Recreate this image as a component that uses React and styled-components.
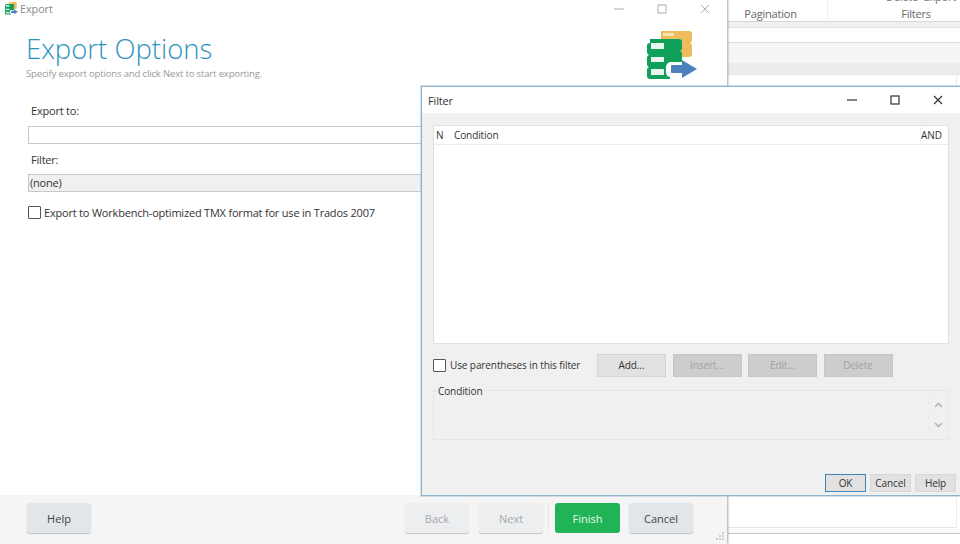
import styled, { createGlobalStyle } from 'styled-components';

const GlobalStyle = createGlobalStyle`
  html, body { margin: 0; padding: 0; background: #fff; }
  body { font-family: "Open Sans", "Noto Sans", sans-serif; overflow: hidden; }
`;

const Desktop = styled.div`
  position: relative;
  width: 960px;
  height: 544px;
  overflow: hidden;
  background: #fff;
  color: #333;
`;

/* main window behind everything, on the right side */
const BackWindow = styled.div`
  position: absolute;
  left: 728px;
  top: 0;
  width: 232px;
  height: 544px;
  display: flex;
  flex-direction: column;
  background: #fff;
`;

const Ribbon = styled.div`
  height: 22px;
  box-sizing: border-box;
  position: relative;
  display: grid;
  grid-template-columns: 100px 1fr;
  border-bottom: 1px solid #d8d8d8;
  font-size: 11px;
  letter-spacing: -0.2px;
  color: #666;
`;

const RibbonGroup = styled.div`
  text-align: center;
  line-height: 27px;
  padding-left: ${p => p.$pad || 0}px;
  padding-right: ${p => p.$padRight || 0}px;
  border-right: ${p => (p.$line ? '1px solid #f0f0f0' : 'none')};
`;

const RibbonClipped = styled.div`
  position: absolute;
  right: 4px;
  top: -9px;
  font-size: 11px;
  line-height: 12px;
  color: #777;
  word-spacing: 3px;
`;

const Band = styled.div`
  height: ${p => p.$h}px;
  background: ${p => p.$bg};
  border-bottom: ${p => (p.$line ? `1px solid ${p.$line}` : 'none')};
  flex-shrink: 0;
`;

const ResultsArea = styled.div`
  flex: 1;
  margin-right: 3px;
  border-right: 1px solid #ececec;
  border-bottom: 1px solid #e4e4e4;
`;

const ExportWindow = styled.div`
  position: absolute;
  left: 0;
  top: 0;
  width: 727px;
  height: 544px;
  display: flex;
  flex-direction: column;
  background: #fff;
  box-shadow: 1px 0 2px rgba(0, 0, 0, 0.35);
`;

const TitleBar = styled.div`
  display: flex;
  align-items: center;
  height: ${p => p.$h}px;
  flex-shrink: 0;
  background: #fff;
  padding-left: ${p => p.$left}px;
  font-size: 11px;
  letter-spacing: -0.15px;
  color: ${p => p.$color};
`;

const TitleText = styled.span`
  flex: 1;
  margin-left: ${p => p.$gap || 0}px;
`;

const WinButtons = styled.div`
  display: flex;
  align-items: center;
  margin-right: ${p => p.$right}px;
  gap: ${p => p.$gap}px;
  color: ${p => p.$color};
`;

const Header = styled.div`
  position: relative;
  height: 75px;
  flex-shrink: 0;
  padding: 14px 0 0 26px;
  box-sizing: border-box;
`;

const Heading = styled.h1`
  margin: 0;
  font-size: 27.5px;
  line-height: 36px;
  font-weight: 300;
  color: #2b93bf;
`;

const SubHeading = styled.p`
  margin: 0;
  font-size: 9.5px;
  letter-spacing: -0.15px;
  line-height: 13px;
  color: #999;
`;

const LargeLogo = styled.div`
  position: absolute;
  right: 30px;
  top: 14px;
`;

const Body = styled.div`
  flex: 1;
  display: flex;
  flex-direction: column;
  padding: 11px 0 0 28px;
  font-size: 11px;
  letter-spacing: -0.2px;
`;

const FieldLabel = styled.label`
  line-height: 16px;
  padding-left: 3px;
  margin-bottom: ${p => p.$mb}px;
  color: #333;
`;

const TextBox = styled.div`
  width: 500px;
  height: 16px;
  flex-shrink: 0;
  background: ${p => (p.$disabled ? '#f0f0f0' : '#fff')};
  border: 1px solid #c8c8c8;
  margin-bottom: ${p => p.$mb}px;
  padding-left: 1px;
  line-height: 16px;
  color: #333;
`;

const CheckRow = styled.div`
  display: flex;
  align-items: center;
  gap: ${p => p.$gap}px;
  color: #333;
`;

const CheckBox = styled.span`
  width: 11px;
  height: 11px;
  background: #fff;
  border: 1px solid #555;
  border-radius: 1px;
  flex-shrink: 0;
`;

const Footer = styled.div`
  height: 49px;
  flex-shrink: 0;
  box-sizing: border-box;
  display: flex;
  align-items: center;
  background: #f5f5f5;
  padding: 0 0 3px 27px;
  position: relative;
`;

const WizardButton = styled.div`
  width: ${p => p.$w || 64}px;
  height: 30px;
  margin-left: ${p => p.$ml || 0}px;
  display: flex;
  align-items: center;
  justify-content: center;
  border-radius: 3px;
  font-size: 11px;
  background: ${p => (p.$primary ? '#21b457' : p.$disabled ? '#eceef0' : '#e1e6ea')};
  color: ${p => (p.$primary ? '#e8f8ee' : p.$disabled ? '#a5a9ad' : '#444')};
  box-shadow: ${p => (p.$primary ? 'none' : '0 1px 1px #bfc4c8')};
`;

const Divider = styled.div`
  width: 1px;
  height: 30px;
  margin-left: 5px;
  background: #e8e8e8;
`;

const Grip = styled.svg`
  position: absolute;
  right: 2px;
  bottom: 1px;
`;

const FilterWindow = styled.div`
  position: absolute;
  left: 421px;
  top: 86px;
  width: 539px;
  height: 410px;
  box-sizing: border-box;
  display: flex;
  flex-direction: column;
  background: #f0f0f0;
  border: 1px solid #8fb4cf;
  border-right: none;
  box-shadow: 0 0 0 1px rgba(143, 180, 207, 0.4);
`;

const FilterBody = styled.div`
  flex: 1;
  display: flex;
  flex-direction: column;
  padding: 12px 11px 0 11px;
  font-size: 10px;
  letter-spacing: -0.1px;
`;

const ListBox = styled.div`
  height: 219px;
  flex-shrink: 0;
  display: flex;
  flex-direction: column;
  background: #fff;
  border: 1px solid #e2e2e2;
  box-sizing: border-box;
`;

const ListHeader = styled.div`
  display: grid;
  grid-template-columns: 20px 1fr 28px;
  height: 18px;
  border-bottom: 1px solid #ececec;
  line-height: 19px;
  color: #333;
`;

const ListColumn = styled.div`
  padding-left: ${p => p.$pad}px;
  border-left: ${p => (p.$line ? '1px solid #f3f3f3' : 'none')};
`;

const ToolRow = styled.div`
  display: flex;
  align-items: center;
  height: 24px;
  margin-top: 9px;
`;

const CheckWrap = styled.div`
  width: 164px;
  flex-shrink: 0;
`;

const ToolButton = styled.div`
  width: 69px;
  height: 23px;
  margin-right: 6.5px;
  display: flex;
  align-items: center;
  justify-content: center;
  box-sizing: border-box;
  background: ${p => (p.$disabled ? '#cdcdcd' : '#e1e1e1')};
  border: 1px solid ${p => (p.$disabled ? '#c6c6c6' : '#d4d4d4')};
  color: ${p => (p.$disabled ? '#a3a3a3' : '#333')};
`;

const GroupBox = styled.div`
  position: relative;
  display: flex;
  justify-content: flex-end;
  margin-top: 13px;
  height: 50px;
  flex-shrink: 0;
  box-sizing: border-box;
  border: 1px solid #e6e6e6;
`;

const GroupLabel = styled.span`
  position: absolute;
  left: 4px;
  top: -7px;
  line-height: 14px;
  color: #333;
  background: #f0f0f0;
  padding-right: 2px;
`;

const ScrollArrows = styled.div`
  width: 19px;
  display: flex;
  flex-direction: column;
  align-items: center;
  justify-content: center;
  gap: 14px;
  border-left: 1px solid #ececec;
`;

const DialogButtons = styled.div`
  display: flex;
  justify-content: flex-end;
  margin-top: auto;
  margin-right: -7px;
  margin-bottom: 3px;
  gap: 4px;
`;

const DialogButton = styled.div`
  width: 41px;
  height: 18px;
  box-sizing: border-box;
  display: flex;
  align-items: center;
  justify-content: center;
  background: #e1e1e1;
  border: 1px solid ${p => (p.$focus ? '#3f86b8' : '#d8d8d8')};
  color: #333;
`;

const AppIcon = ({ size, style }) => (
  <svg width={size} height={size * 0.96} viewBox="0 0 50 48" style={style}>
    <path d="M14 0h28a3 3 0 0 1 3 3v6a3 3 0 0 1-2 3 3 3 0 0 1 2 3v8a3 3 0 0 1-3 3H14z" fill="#eebc5d" />
    <rect x="16" y="2" width="11" height="3" fill="#f7e3b5" />
    <path d="M3 8h29a3 3 0 0 1 3 3v6a3 3 0 0 1-2 3 3 3 0 0 1 2 3v8H24a5 5 0 0 0-5 5v5a5 5 0 0 0 4 5v2H3a3 3 0 0 1-3-3v-6a3 3 0 0 1 2-3 3 3 0 0 1-2-3v-6a3 3 0 0 1 2-3 3 3 0 0 1-2-3v-6a3 3 0 0 1 3-3z" fill="#10a05a" />
    <rect x="4" y="12" width="13" height="6" fill="#e9f5ee" />
    <rect x="4" y="26" width="13" height="5" fill="#e9f5ee" />
    <rect x="4" y="38" width="13" height="6" fill="#e9f5ee" />
    <path d="M25 34h10v-5l15 9-15 9v-5H25a1 1 0 0 1-1-1v-6a1 1 0 0 1 1-1z" fill="#4c80bf" />
  </svg>
);

const Chrome = ({ right, gap, color, stroke }) => (
  <WinButtons $right={right} $gap={gap} $color={color}>
    <svg width="10" height="10" viewBox="0 0 10 10"><path d="M0 5h10" stroke="currentColor" strokeWidth={stroke} /></svg>
    <svg width="10" height="10" viewBox="0 0 10 10"><rect x="1" y="1" width="8" height="8" fill="none" stroke="currentColor" strokeWidth={stroke} /></svg>
    <svg width="10" height="10" viewBox="0 0 10 10"><path d="M1 1l8 8M9 1l-8 8" stroke="currentColor" strokeWidth={stroke} /></svg>
  </WinButtons>
);

const Chevron = ({ up }) => (
  <svg width="9" height="6" viewBox="0 0 9 6">
    <path d={up ? 'M1 5l3.5-3.5L8 5' : 'M1 1l3.5 3.5L8 1'} fill="none" stroke="#b5b5b5" strokeWidth="1.6" />
  </svg>
);

export default function App() {
  return (
    <Desktop>
      <GlobalStyle />

      <BackWindow>
        <Ribbon>
          <RibbonGroup $line $padRight={14}>Pagination</RibbonGroup>
          <RibbonGroup $pad={44}>Filters</RibbonGroup>
          <RibbonClipped>Delete Export</RibbonClipped>
        </Ribbon>
        <Band $h={5} $bg="#f0f0f0" $line="#e2e2e2" />
        <Band $h={14} $bg="#fff" $line="#dcdcdc" />
        <Band $h={20} $bg="#f5f5f5" />
        <Band $h={11} $bg="#ececec" $line="#e4e4e4" />
        <ResultsArea />
        <Band $h={5} $bg="#fafafa" $line="#bfc3c6" />
        <Band $h={10} $bg="#fff" />
      </BackWindow>

      <ExportWindow>
        <TitleBar $h={17} $left={5} $color="#8a8a8a">
          <AppIcon size={13} />
          <TitleText $gap={2}>Export</TitleText>
          <Chrome right={17} gap={33} color="#a5a5a5" stroke={0.9} />
        </TitleBar>
        <Header>
          <Heading>Export Options</Heading>
          <SubHeading>Specify export options and click Next to start exporting.</SubHeading>
          <LargeLogo><AppIcon size={50} /></LargeLogo>
        </Header>
        <Body>
          <FieldLabel $mb={7}>Export to:</FieldLabel>
          <TextBox $mb={8} />
          <FieldLabel $mb={6}>Filter:</FieldLabel>
          <TextBox $disabled $mb={13}>(none)</TextBox>
          <CheckRow $gap={3}>
            <CheckBox />
            Export to Workbench-optimized TMX format for use in Trados 2007
          </CheckRow>
        </Body>
        <Footer>
          <WizardButton>Help</WizardButton>
          <WizardButton $disabled $ml={314}>Back</WizardButton>
          <WizardButton $disabled $ml={10}>Next</WizardButton>
          <Divider />
          <WizardButton $primary $ml={6} $w={65}>Finish</WizardButton>
          <WizardButton $ml={9}>Cancel</WizardButton>
          <Grip width="12" height="12" viewBox="0 0 12 12">
            <path d="M9 1h2v2H9zM6 4h2v2H6zM9 4h2v2H9zM3 7h2v2H3zM6 7h2v2H6zM9 7h2v2H9z" fill="#cfcfcf" />
          </Grip>
        </Footer>
      </ExportWindow>

      <FilterWindow>
        <TitleBar $h={26} $left={6} $color="#333">
          <TitleText>Filter</TitleText>
          <Chrome right={17} gap={33} color="#333" stroke={1.2} />
        </TitleBar>
        <FilterBody>
          <ListBox>
            <ListHeader>
              <ListColumn $pad={2}>N</ListColumn>
              <ListColumn $pad={0}>Condition</ListColumn>
              <ListColumn $pad={0} $line>AND</ListColumn>
            </ListHeader>
          </ListBox>
          <ToolRow>
            <CheckWrap>
              <CheckRow $gap={4}>
                <CheckBox />
                Use parentheses in this filter
              </CheckRow>
            </CheckWrap>
            <ToolButton>Add...</ToolButton>
            <ToolButton $disabled>Insert...</ToolButton>
            <ToolButton $disabled>Edit...</ToolButton>
            <ToolButton $disabled>Delete</ToolButton>
          </ToolRow>
          <GroupBox>
            <GroupLabel>Condition</GroupLabel>
            <ScrollArrows>
              <Chevron up />
              <Chevron />
            </ScrollArrows>
          </GroupBox>
          <DialogButtons>
            <DialogButton $focus>OK</DialogButton>
            <DialogButton>Cancel</DialogButton>
            <DialogButton>Help</DialogButton>
          </DialogButtons>
        </FilterBody>
      </FilterWindow>
    </Desktop>
  );
}
